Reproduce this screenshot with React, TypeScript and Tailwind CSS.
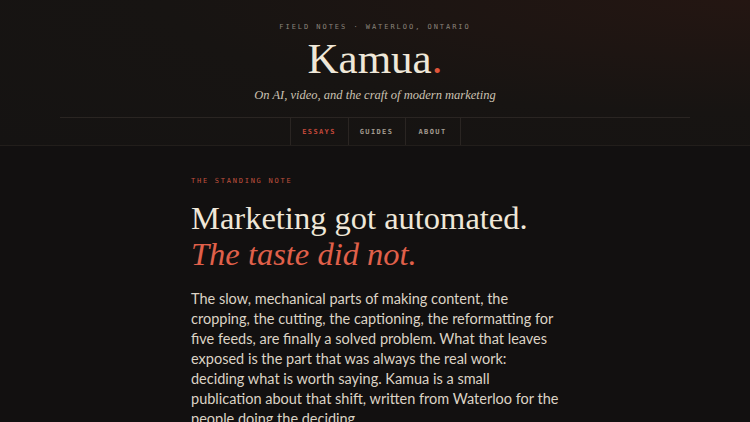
export default function App() {
  const mono = { fontFamily: '"DejaVu Sans Mono", "Liberation Mono", monospace' };
  const serif = { fontFamily: '"Liberation Serif", "DejaVu Serif", serif' };

  return (
    <main className="min-h-screen bg-[#121010] text-[#ece4d6]" style={{ fontFamily: 'Lato, "Noto Sans", sans-serif' }}>
      {/* header */}
      <header className="bg-[radial-gradient(ellipse_at_top_right,#241612_0%,#171412_55%,#151312_100%)] border-b border-[#221e1b]">
        <div className="pt-[22px] flex flex-col items-center">
          <p className="text-[7px] tracking-[0.28em] text-[#8a837a] uppercase" style={mono}>
            Field Notes · Waterloo, Ontario
          </p>
          <h1 className="text-[43px] leading-[44px] mt-[4px] text-[#efe7d8]" style={serif}>
            Kamua<span className="text-[#e0553a]">.</span>
          </h1>
          <p className="italic text-[12.5px] mt-[5px] text-[#cbc2b2]" style={serif}>
            On AI, video, and the craft of modern marketing
          </p>
        </div>
        <nav className="mx-auto w-[630px] mt-[13px] border-t border-[#2a2522] flex justify-center">
          <div className="flex border-l border-[#2a2522]">
            {["Essays", "Guides", "About"].map((n, i) => (
              <a
                key={n}
                className={`h-[27px] flex items-center justify-center border-r border-[#2a2522] text-[7px] font-bold tracking-[0.2em] uppercase ${i === 0 ? "w-[58px] text-[#c4483a]" : i === 1 ? "w-[57px] text-[#a39b90]" : "w-[55px] text-[#a39b90]"}`}
                style={mono}
              >
                {n}
              </a>
            ))}
          </div>
        </nav>
      </header>

      {/* main */}
      <section className="mx-auto w-[368px] pt-[30px]">
        <p className="text-[7px] tracking-[0.25em] uppercase text-[#c0513e]" style={mono}>
          The Standing Note
        </p>
        <h2 className="mt-[13px] text-[32.5px] leading-[36px] text-[#efe7d8]" style={serif}>
          Marketing got automated.
          <br />
          <em className="text-[#e0604a]">The taste did not.</em>
        </h2>
        <p className="mt-[17px] text-[14.5px] leading-[20px] text-[#dcd3c5]">
          The slow, mechanical parts of making content, the cropping, the cutting, the captioning, the reformatting
          for five feeds, are finally a solved problem. What that leaves exposed is the part that was always the real
          work: deciding what is worth saying. Kamua is a small publication about that shift, written from Waterloo
          for the people doing the deciding.
        </p>
      </section>
    </main>
  );
}
